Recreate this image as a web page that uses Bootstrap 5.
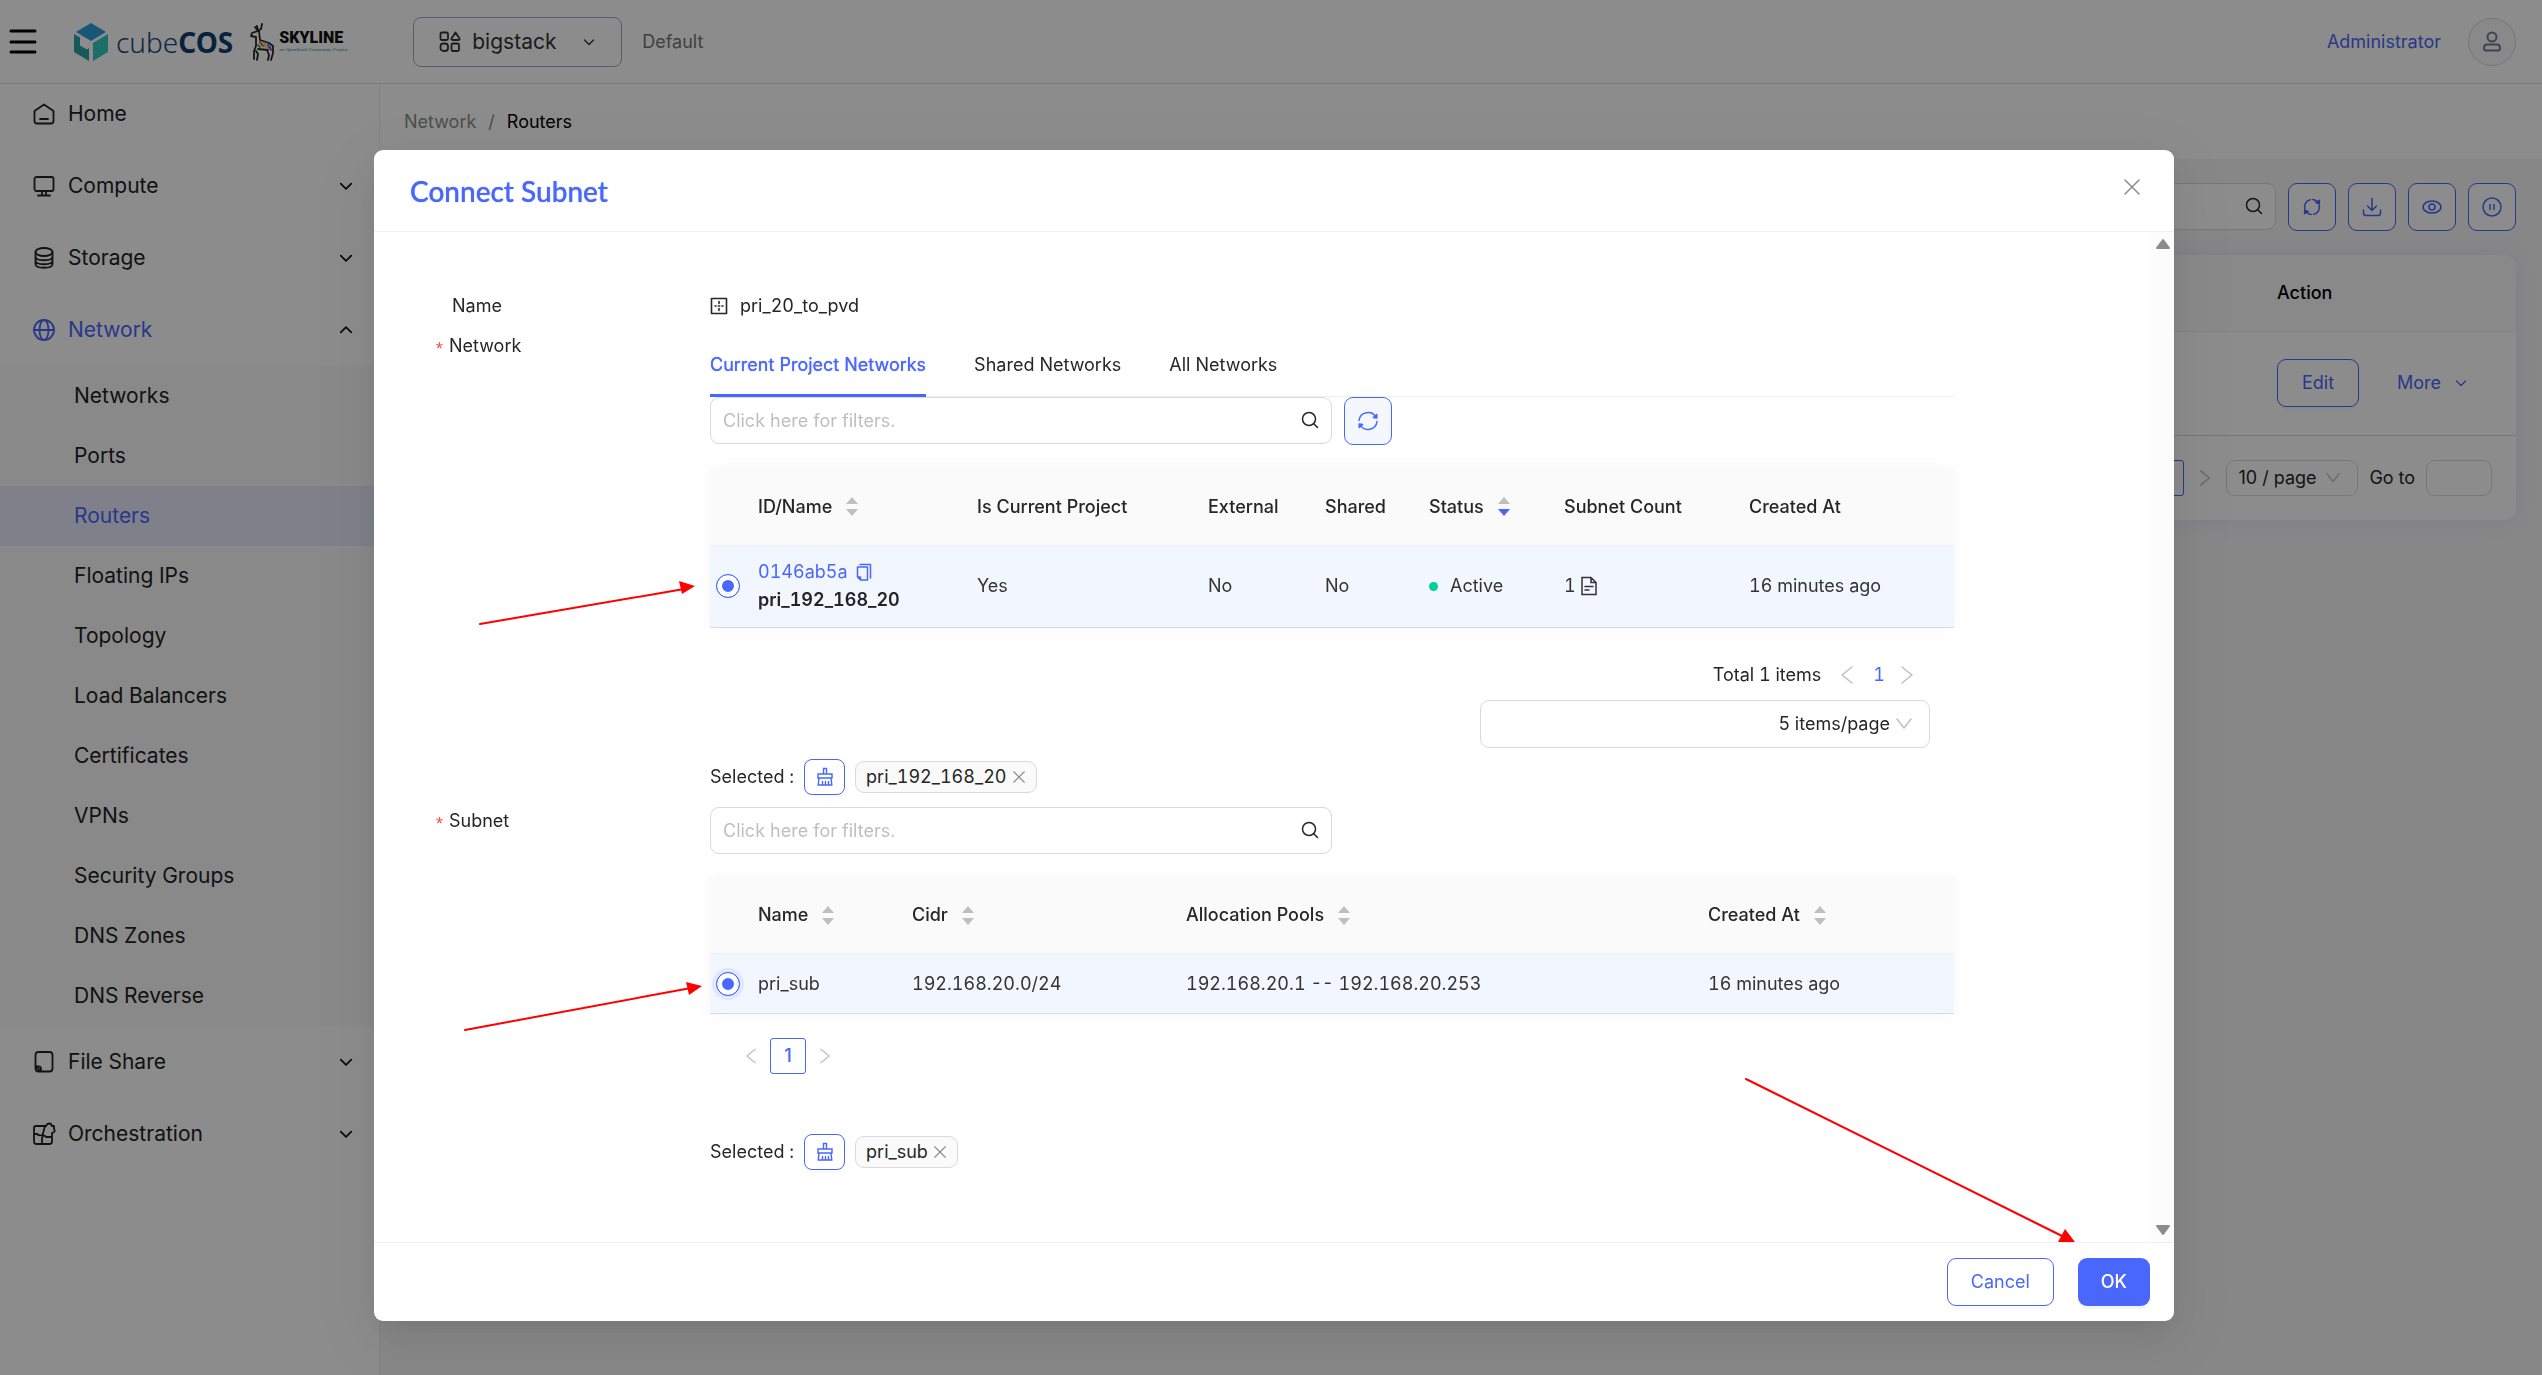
<!DOCTYPE html>
<html lang="en">
<head>
<meta charset="utf-8">
<meta name="viewport" content="width=device-width, initial-scale=1">
<title>Routers - Connect Subnet</title>
<link href="https://cdn.jsdelivr.net/npm/bootstrap@5.3.0/dist/css/bootstrap.min.css" rel="stylesheet">
<style>
:root{--brand:#4a67fb;--ink:#262626;--line:#d9d9d9;--soft:#f0f0f0}
body{font-family:Inter,"Liberation Sans",sans-serif;font-size:18px;line-height:28px;color:var(--ink);font-feature-settings:"tnum";background:#f6f6f7}
a{color:inherit;text-decoration:none}
svg{fill:none;stroke:currentColor;stroke-linecap:round;stroke-linejoin:round;display:block;flex:none}
.i24{width:24px;height:24px}.i20{width:20px;height:20px}.i16{width:16px;height:16px}.i14{width:14px;height:14px}.i12{width:12px;height:12px}
.brand{color:var(--brand)}
.mute{color:#bfbfbf}
.grey{color:#8c8c8c}
/* header */
.topbar{height:84px;border-bottom:1px solid #dcdcdc;background:#fff;padding:0 26px 0 8px}
.plain{border:0;background:none;padding:0}
.logo-cube{width:34px;height:38px;stroke:none;margin-left:36px}
.logo-word{font-size:28px;color:#16497d;line-height:36px;margin-left:8px;font-family:"Noto Sans",sans-serif;font-weight:300}
.logo-word b{font-weight:700;color:#0f3f70}
.deer{width:26px;height:38px;margin-left:16px}
.sky{margin-left:4px;width:70px;color:#111;white-space:nowrap}
.sky-name{font-family:Roboto,sans-serif;font-size:16px;line-height:16px;font-weight:900}
.sky-sub{font-size:5px;line-height:8px;color:#2583ab;font-style:italic;font-family:"Liberation Serif",serif}
.proj{height:50px;width:209px;border:1px solid #a3a8b8;border-radius:8px;background:#fff;padding:0 26px 0 24px;gap:10px;font-size:21px;color:#333;margin-left:64px}
.domain{color:#757575;margin-left:20px}
.avatar{width:48px;height:48px;border:1px solid #d3d6e2;border-radius:50%;background:#fafafa;color:#777b88;margin-left:27px}
/* sidebar */
.side{width:380px;background:#fff;border-right:1px solid #eee;color:#222;font-size:21px}
.side-item{height:60px;margin:6px 0;padding:0 26px 0 32px;gap:12px}
.side-item:first-child{margin-top:0}
.side-item.on{color:var(--brand)}
.side-item .chev{color:#111}
.side-sub{background:#fafafb}
.side-sub a{display:flex;align-items:center;height:60px;padding-left:74px}
.side-sub a.on{background:#e9e9fb;color:var(--brand)}
/* page */
.crumbs{height:75px;background:#fff;padding:0 24px;color:#8c8c8c}
.page{padding:24px 26px 24px 24px}
.bar-gap{gap:12px}
.tool{width:48px;height:48px;border:1px solid var(--brand);border-radius:9px;color:var(--brand);background:#fff;padding:0}
.tool.pale{background:#f5f7ff}
.field{border:1px solid var(--line);border-radius:9px;background:#fff;color:var(--ink);font-size:18px;height:47px;padding:0 40px 0 12px;width:100%}
.field::placeholder{color:#bfbfbf;opacity:1}
.lens{top:13px;right:12px}
.panel{margin-top:24px;background:#fff;border-radius:12px;box-shadow:0 0 24px rgba(70,80,160,.08);overflow:hidden}
.grid{width:100%;table-layout:fixed;border-collapse:collapse}
.grid th{height:76px;background:#fafafa;border-bottom:1px solid var(--soft);font-weight:500;padding:0 12px}
.grid td{border-bottom:1px solid #d6dae8;padding:0 12px}
.act-col{width:251px}
.grid .tall{height:104px}
.btn-line{min-width:82px;height:48px;border:1px solid var(--brand);border-radius:9px;background:#fff;color:var(--brand);padding:0 23px;box-shadow:0 3px 0 rgba(0,0,0,.02)}
.more{margin-left:38px;gap:14px}
.pager{padding:24px 24px 24px 0;gap:11px}
.pg{min-width:36px;height:36px;border:1px solid var(--brand);border-radius:3px;color:var(--brand);font-weight:500;background:#fff;padding:0}
.pick{appearance:none;border:1px solid var(--line);border-radius:9px;background:#fff;color:var(--ink);padding:0 0 0 11px;height:36px;width:132px}
.goto{width:66px;height:36px;padding:0 8px}
.caret-r{top:50%;right:18px;transform:translateY(-50%);pointer-events:none}
/* dialog */
.modal-backdrop{--bs-backdrop-opacity:.45}
.modal{padding-left:6px}
.modal-dialog{max-width:1800px;margin:150px auto 0}
.modal-content{border:0;border-radius:9px;box-shadow:0 9px 24px -12px rgba(0,0,0,.12),0 14px 42px rgba(0,0,0,.06),0 18px 72px 24px rgba(0,0,0,.04)}
.modal-header{height:82px;padding:0 34px 0 36px;border-bottom:1px solid var(--soft)}
.modal-title{font-family:Lato,sans-serif;font-size:28px;line-height:36px;font-weight:500;color:var(--brand);text-shadow:0 0 1px var(--brand)}
.shut{margin-bottom:8px}
.form-area{padding:60px 197px 72px 36px}
.lab{width:300px;padding-left:42px}
.lab.req{padding-left:24px}
.star{display:inline-block;width:15px;color:#ff4d4f;font-family:"Liberation Mono",monospace;vertical-align:-3px}
.gap-name{gap:12px}
.f-row+.f-row{margin-top:12px}
.tabs{height:65px;gap:48px;border-bottom:1px solid var(--soft)}
.tabs button{margin-bottom:-1px;padding-top:3px;border-bottom:3px solid transparent;color:var(--ink)}
.tabs button.on{color:var(--brand);text-shadow:0 0 1px var(--brand);border-color:var(--brand)}
.filter{width:622px}
.tbl{margin-top:24px;box-shadow:0 0 18px rgba(0,0,0,.035)}
.tbl td{background:#f2f6ff;color:#333}
.tbl .h82{height:82px}.tbl .h59{height:60px}
.tbl td:first-child{padding:0 0 0 6px}
.id-cell{line-height:28px}
.c-r{width:36px}
.pick-dot{appearance:none;display:block;width:24px;height:24px;border:1px solid var(--brand);border-radius:50%;background:var(--brand);box-shadow:inset 0 0 0 5px #fff;margin:0}
.pick-dot.lit{box-shadow:inset 0 0 0 5px #fff,0 0 0 4px #e0e8ff}
.sort{width:12px;height:19px;stroke:none;fill:#bfbfbf;margin-left:14px}
.sort .hot{fill:var(--brand)}
.dot{width:9px;height:9px;border-radius:50%;background:#00d19b;margin-right:12px}
.total{margin-top:29px;height:36px;gap:16px;padding-right:17px}
.sizer{width:450px;margin:7px 24px 0 auto}
.sizer .pick{width:100%;height:48px;text-align-last:right;padding-right:39px}
.sel{height:36px;margin-top:11px}
.sweep{width:41px;height:36px;border:1px solid var(--brand);border-radius:8px;color:var(--brand);background:#fff;padding:0;margin:0 10px;box-shadow:0 3px 0 rgba(0,0,0,.02)}
.chip{height:32px;border:1px solid var(--line);border-radius:9px;background:#fafafa;padding:0 11px 0 10px;gap:6px}
.pg-row{margin-top:24px;padding-left:32px;gap:10px}
.sel.low{margin-top:60px}
.rail{flex:none;width:23px;background:#fcfcfc;padding:6px 0}
.rail svg{fill:#8b8b8b;stroke:#8b8b8b;width:16px;height:12px}
.modal-footer{height:79px;padding:0 24px;gap:24px;border-top:1px solid var(--soft)}
.modal-footer button{margin:0}
.btn-fill{height:48px;border:0;border-radius:9px;background:var(--brand);color:#fff;padding:0 23px;font-weight:500;box-shadow:0 3px 0 rgba(0,0,0,.045)}
.notes{inset:0;width:100%;height:100%;z-index:1060;pointer-events:none;stroke:#f00;stroke-width:2}
.notes polygon{fill:#f00;stroke:none}
</style>
</head>
<body>
<svg class="d-none" aria-hidden="true">
 <symbol id="down" viewBox="0 0 12 12"><path d="M1.500 4l4.500 4.500L10.500 4"/></symbol>
 <symbol id="wide" viewBox="0 0 16 12"><path d="M1 1l7 9 7-9"/></symbol>
 <symbol id="left" viewBox="0 0 12 18"><path d="M11 1L1 9l10 8"/></symbol>
 <symbol id="right" viewBox="0 0 12 18"><path d="M1 1l10 8L1 17"/></symbol>
 <symbol id="lens" viewBox="0 0 20 20"><circle cx="9" cy="9" r="6.500"/><path d="M14 14l3.500 3.500"/></symbol>
 <symbol id="sync" viewBox="0 0 24 24"><path d="M3.500 14.500A8.800 8.800 0 0 1 10 3.200M13 3a9 9 0 0 1 5.500 2.700M20.500 9.500A8.800 8.800 0 0 1 14 20.800M11 21a9 9 0 0 1-5.500-2.700"/><path d="M16.500 6.500l4.500-2.500-.3 4.300zM7.500 17.500L3 20l.3-4.300z" fill="currentColor"/></symbol>
 <symbol id="ring" viewBox="0 0 24 24"><path d="M3 11.500a9 9 0 0 1 17-3M21 12.500a9 9 0 0 1-17 3"/><path d="M20.800 5.500v3.500l-3.500-.4zM3.200 18.500v-3.500l3.500 .4z" fill="currentColor"/></symbol>
 <symbol id="broom" viewBox="0 0 20 20"><path d="M8.500 7V1.500h3V7M3 7h14v4H3zM4 11l-.8 7h13.600l-.8-7M7.500 18v-3.500M10.500 18v-3.500M13.500 18v-3.500" stroke-linejoin="miter"/></symbol>
 <symbol id="close" viewBox="0 0 16 16"><path d="M1 1l14 14M15 1L1 15"/></symbol>
 <symbol id="updown" viewBox="0 0 12 19"><path d="M6 0l6 7H0zM6 19l6-7H0z"/></symbol>
</svg>

<div class="min-vh-100 d-flex flex-column">
 <header class="topbar d-flex align-items-center">
  <button class="plain" aria-label="Toggle menu"><svg width="30" height="28" viewBox="0 0 30 28" stroke-width="3"><path d="M3 3h24M3 14h24M3 24h24"/></svg></button>
  <svg class="logo-cube" viewBox="0 0 34 38"><path d="M17 0l15 9-15 9L2 9z" fill="#2e9fd8"/><path d="M0 11l6 3.500v8l7 4 2-1.500V38L0 29z" fill="#28a3a5"/><path d="M34 11L19 20v18l15-9z" fill="#33c9c0"/></svg>
  <span class="logo-word">cube<b>COS</b></span>
  <svg class="deer" viewBox="0 0 26 38" stroke="#111" stroke-width="1.800"><path d="M13 1l-1 5-3 2-1-5M6 4l3 4-6 2-1 3 5 1v9l-2 5v8M7 28l2 3-1 6M10 8l1 9 9 3 4 3v7l-2 7M18 27l2 5-1 5M9 26l10 1"/><path d="M11 19l3 4" stroke="#e33"/><path d="M15 20l2 4" stroke="#f5b921"/><path d="M19 21l1 4" stroke="#37c"/><path d="M9 22l2 2" stroke="#3a5"/><path d="M21 24l1 3" stroke="#93c"/></svg>
  <div class="sky"><div class="sky-name">SKYLINE</div><div class="sky-sub">an OpenStack Community Project</div></div>
  <button class="proj d-flex align-items-center"><svg class="i24" viewBox="0 0 24 24" stroke-width="1.800"><rect x="2.500" y="2.500" width="7.500" height="7.500" rx="1.500"/><path d="M17.500 2.500l4 6q.5 1.500-1 1.500h-6q-1.500 0-1-1.500z"/><rect x="2.500" y="13.500" width="7.500" height="7.500" rx="3"/><rect x="13.500" y="13.500" width="7.500" height="7.500" rx="1.500"/></svg><span>bigstack</span><svg class="i12 ms-auto" stroke-width="1.300"><use href="#down"/></svg></button>
  <span class="domain">Default</span>
  <a href="#" class="brand ms-auto">Administrator</a>
  <button class="avatar d-flex align-items-center justify-content-center p-0" aria-label="Account"><svg class="i24" viewBox="0 0 24 24" stroke-width="2"><circle cx="12" cy="7" r="4.500"/><path d="M7 14.500h10q3 0 3 3.500 0 2.500-2 2.500H6q-2 0-2-2.500 0-3.500 3-3.500z"/></svg></button>
 </header>
 <div class="d-flex flex-grow-1">
  <nav class="side flex-shrink-0 d-flex flex-column" aria-label="Main">
   <a href="#" class="side-item d-flex align-items-center"><svg class="i24" viewBox="0 0 24 24" stroke-width="1.800"><path d="M2.500 9L12 2.500 21.500 9v10q0 2.500-2.500 2.500H5Q2.500 21.500 2.500 19zM8 17h8"/></svg>Home</a>
   <a href="#" class="side-item d-flex align-items-center"><svg class="i24" viewBox="0 0 24 24" stroke-width="1.800"><rect x="2.500" y="3" width="19" height="14" rx="2"/><path d="M10 17v4M14 17v4M6 21.500h12"/></svg>Compute<svg class="i14 ms-auto chev" stroke-width="1.500"><use href="#down"/></svg></a>
   <a href="#" class="side-item d-flex align-items-center"><svg class="i24" viewBox="0 0 24 24" stroke-width="1.800"><ellipse cx="12" cy="6" rx="8.500" ry="4"/><path d="M3.500 6v12c0 5 17 5 17 0V6M3.500 10.500c0 5 17 5 17 0M3.500 14.500c0 5 17 5 17 0"/></svg>Storage<svg class="i14 ms-auto chev" stroke-width="1.500"><use href="#down"/></svg></a>
   <a href="#" class="side-item on d-flex align-items-center"><svg class="i24" viewBox="0 0 24 24" stroke-width="1.800"><circle cx="12" cy="12" r="10"/><ellipse cx="12" cy="12" rx="4.500" ry="10"/><path d="M2 12h20"/></svg>Network<svg class="i14 ms-auto chev" viewBox="0 0 12 12" stroke-width="1.500"><path d="M1.500 8L6 3.500 10.500 8"/></svg></a>
   <div class="side-sub">
    <a href="#">Networks</a><a href="#">Ports</a><a href="#" class="on">Routers</a><a href="#">Floating IPs</a><a href="#">Topology</a><a href="#">Load Balancers</a><a href="#">Certificates</a><a href="#">VPNs</a><a href="#">Security Groups</a><a href="#">DNS Zones</a><a href="#">DNS Reverse</a>
   </div>
   <a href="#" class="side-item d-flex align-items-center"><svg class="i24" viewBox="0 0 24 24" stroke-width="1.800"><path d="M6.500 2h11q3 0 3 3v13.500q0 3-3 3H9l-5.500-5V5q0-3 3-3zM3.500 16.500v2q0 3 3 3H9v-2.500q0-2.500-2.500-2.500z"/></svg>File Share<svg class="i14 ms-auto chev" stroke-width="1.500"><use href="#down"/></svg></a>
   <a href="#" class="side-item d-flex align-items-center"><svg class="i24" viewBox="0 0 24 24" stroke-width="1.800"><path d="M14 4H4Q2 4 2 6v13.500Q2 22 4.500 22h13q2.500 0 2.500-2.500V13M14 4q1-2.500 3.500-2.500 2 0 2.200 2.500H22v3q1.500 2 0 3l-2 1v2M14 4q-2 1-2 4l-1 3v3l-1 2v6M2 12h3q2 2 5 1M11 14q2-1 3 1h6"/></svg>Orchestration<svg class="i14 ms-auto chev" stroke-width="1.500"><use href="#down"/></svg></a>
  </nav>
  <main class="flex-grow-1">
   <div class="crumbs d-flex align-items-center"><a href="#">Network</a><span class="px-2 mx-1">/</span><span class="text-black">Routers</span></div>
   <div class="page">
    <div class="d-flex bar-gap">
     <div class="position-relative flex-grow-1"><input class="field" aria-label="Filter routers"><svg class="i20 lens position-absolute" stroke-width="1.500"><use href="#lens"/></svg></div>
     <button class="tool d-flex align-items-center justify-content-center" aria-label="Refresh"><svg class="i20" stroke-width="1.800"><use href="#sync"/></svg></button>
     <button class="tool d-flex align-items-center justify-content-center" aria-label="Download"><svg class="i20" viewBox="0 0 20 20" stroke-width="1.500"><path d="M10 1.500V13M5.500 9l4.500 4.500L14.500 9M1.500 13v3q0 2.500 2.500 2.500h12q2.500 0 2.500-2.500v-3"/></svg></button>
     <button class="tool d-flex align-items-center justify-content-center" aria-label="Columns"><svg class="i20" viewBox="0 0 20 20" stroke-width="1.600"><ellipse cx="10" cy="10" rx="9" ry="6"/><circle cx="10" cy="10" r="3"/></svg></button>
     <button class="tool d-flex align-items-center justify-content-center" aria-label="Pause"><svg class="i20" viewBox="0 0 20 20" stroke-width="1.500"><circle cx="10" cy="10" r="9"/><path d="M8 7.500v5M12 7.500v5"/></svg></button>
    </div>
    <div class="panel">
     <table class="grid"><colgroup><col><col class="act-col"></colgroup>
      <thead><tr><th></th><th class="text-black">Action</th></tr></thead>
      <tbody><tr><td class="tall"></td><td><div class="d-flex align-items-center"><button class="btn-line">Edit</button><button class="plain brand more d-flex align-items-center">More<svg class="i12" stroke-width="1.300"><use href="#down"/></svg></button></div></td></tr></tbody>
     </table>
     <div class="pager d-flex align-items-center justify-content-end"><button class="pg">1</button><svg class="mute mx-1" width="12" height="16" stroke-width="1.500"><use href="#right"/></svg>
      <span class="position-relative"><select class="pick" aria-label="Page size"><option>10 / page</option></select><svg class="mute position-absolute caret-r" width="14" height="11" stroke-width="1.500"><use href="#wide"/></svg></span>
      <label for="goto">Go to</label><input id="goto" class="field goto"></div>
    </div>
   </div>
  </main>
 </div>
</div>

<div class="modal-backdrop show"></div>
<div class="modal d-block" role="dialog" aria-labelledby="dlg-title">
 <div class="modal-dialog">
  <div class="modal-content">
   <div class="modal-header d-flex justify-content-between">
    <h1 class="modal-title" id="dlg-title">Connect Subnet</h1>
    <button class="plain grey shut" aria-label="Close"><svg class="i16" stroke-width="1.500"><use href="#close"/></svg></button>
   </div>
   <div class="d-flex">
    <form class="form-area flex-grow-1">
     <div class="f-row d-flex"><div class="lab flex-shrink-0">Name</div>
      <div class="d-flex align-items-center gap-name"><svg width="18" height="18" viewBox="0 0 18 18" stroke-width="1.600" stroke-linecap="butt"><rect x="1.500" y="1.500" width="15" height="15"/><path d="M5 9h1M8.300 9h1.400M12 9h1M9 4.500v2M9 11.500v2"/></svg><span>pri_20_to_pvd</span></div>
     </div>
     <div class="f-row d-flex"><label class="lab req flex-shrink-0" for="net-filter"><span class="star">*</span>Network</label>
      <div class="flex-grow-1">
       <div class="tabs d-flex" role="tablist"><button type="button" class="plain on" role="tab">Current Project Networks</button><button type="button" class="plain" role="tab">Shared Networks</button><button type="button" class="plain" role="tab">All Networks</button></div>
       <div class="d-flex bar-gap"><div class="position-relative filter"><input id="net-filter" class="field" placeholder="Click here for filters."><svg class="i20 lens position-absolute" stroke-width="1.500"><use href="#lens"/></svg></div>
        <button type="button" class="tool pale d-flex align-items-center justify-content-center" aria-label="Refresh"><svg class="i24" stroke-width="1.500"><use href="#ring"/></svg></button></div>
       <table class="grid tbl mt-4 pt-0">
        <colgroup><col class="c-r"><col style="width:219px"><col style="width:231px"><col style="width:117px"><col style="width:104px"><col style="width:135px"><col style="width:185px"><col></colgroup>
        <thead><tr><th></th><th><div class="d-flex align-items-center">ID/Name<svg class="sort" viewBox="0 0 12 19"><use href="#updown"/></svg></div></th><th>Is Current Project</th><th>External</th><th>Shared</th><th><div class="d-flex align-items-center">Status<svg class="sort" viewBox="0 0 12 19"><path d="M6 0l6 7H0z"/><path class="hot" d="M6 19l6-7H0z"/></svg></div></th><th>Subnet Count</th><th>Created At</th></tr></thead>
        <tbody><tr><td class="h82"><input type="radio" class="pick-dot" name="net" checked aria-label="pri_192_168_20"></td>
         <td class="id-cell"><div class="d-flex align-items-center"><a href="#" class="brand">0146ab5a</a><svg class="brand ms-2" width="16" height="18" viewBox="0 0 16 18" stroke-width="1.500" stroke-linejoin="miter"><path d="M1.500 4h10v13h-7l-3-3zM1.500 14h3v3M4 1.500h10.500V15"/></svg></div><b class="fw-semibold text-body">pri_192_168_20</b></td>
         <td>Yes</td><td>No</td><td>No</td><td><div class="d-flex align-items-center"><span class="dot"></span>Active</div></td>
         <td><div class="d-flex align-items-center">1<svg class="ms-1" width="18" height="20" viewBox="0 0 18 20" stroke-width="1.500"><path d="M2 1.500h9l5 5v12H2zM11 1.500v5h5M5 10.500h8M5 14h4" stroke-linejoin="miter"/></svg></div></td><td>16 minutes ago</td></tr></tbody>
       </table>
       <div class="total d-flex align-items-center justify-content-end"><span>Total 1 items</span><svg class="mute ms-1 me-1" width="12" height="18" stroke-width="1.500"><use href="#left"/></svg><a href="#" class="brand">1</a><svg class="mute me-4" width="12" height="18" stroke-width="1.500"><use href="#right"/></svg></div>
       <div class="sizer position-relative"><select class="pick" aria-label="Items per page"><option>5 items/page</option></select><svg class="mute position-absolute caret-r" width="16" height="12" stroke-width="1.500"><use href="#wide"/></svg></div>
       <div class="sel d-flex align-items-center">Selected :<button type="button" class="sweep d-flex align-items-center justify-content-center" aria-label="Clear"><svg class="i20" stroke-width="1.400"><use href="#broom"/></svg></button><span class="chip d-flex align-items-center">pri_192_168_20<button type="button" class="plain grey" aria-label="Remove"><svg class="i12" stroke-width="1.500"><use href="#close"/></svg></button></span></div>
      </div>
     </div>
     <div class="f-row d-flex"><label class="lab req flex-shrink-0" for="sub-filter"><span class="star">*</span>Subnet</label>
      <div class="flex-grow-1">
       <div class="position-relative filter"><input id="sub-filter" class="field" placeholder="Click here for filters."><svg class="i20 lens position-absolute" stroke-width="1.500"><use href="#lens"/></svg></div>
       <table class="grid tbl">
        <colgroup><col class="c-r"><col style="width:154px"><col style="width:274px"><col style="width:522px"><col></colgroup>
        <thead><tr><th></th><th><div class="d-flex align-items-center">Name<svg class="sort" viewBox="0 0 12 19"><use href="#updown"/></svg></div></th><th><div class="d-flex align-items-center">Cidr<svg class="sort" viewBox="0 0 12 19"><use href="#updown"/></svg></div></th><th><div class="d-flex align-items-center">Allocation Pools<svg class="sort" viewBox="0 0 12 19"><use href="#updown"/></svg></div></th><th><div class="d-flex align-items-center">Created At<svg class="sort" viewBox="0 0 12 19"><use href="#updown"/></svg></div></th></tr></thead>
        <tbody><tr><td class="h59"><input type="radio" class="pick-dot lit" name="sub" checked aria-label="pri_sub"></td><td>pri_sub</td><td>192.168.20.0/24</td><td>192.168.20.1 -- 192.168.20.253</td><td>16 minutes ago</td></tr></tbody>
       </table>
       <div class="pg-row d-flex align-items-center"><svg class="mute mx-1" width="10" height="16" stroke-width="1.500"><use href="#left"/></svg><button type="button" class="pg">1</button><svg class="mute mx-1" width="10" height="16" stroke-width="1.500"><use href="#right"/></svg></div>
       <div class="sel low d-flex align-items-center">Selected :<button type="button" class="sweep d-flex align-items-center justify-content-center" aria-label="Clear"><svg class="i20" stroke-width="1.400"><use href="#broom"/></svg></button><span class="chip d-flex align-items-center">pri_sub<button type="button" class="plain grey" aria-label="Remove"><svg class="i12" stroke-width="1.500"><use href="#close"/></svg></button></span></div>
      </div>
     </div>
    </form>
    <div class="rail d-flex flex-column justify-content-between align-items-center" aria-hidden="true"><svg viewBox="0 0 16 12" stroke-width="2"><path d="M8 2l6 8H2z"/></svg><svg viewBox="0 0 16 12" stroke-width="2"><path d="M8 10l6-8H2z"/></svg></div>
   </div>
   <div class="modal-footer d-flex justify-content-end"><button class="btn-line">Cancel</button><button class="btn-fill">OK</button></div>
  </div>
 </div>
</div>
<svg class="notes position-fixed" aria-hidden="true"><path d="M480 624L684 589M465 1030L691 988M1746 1079L2062 1236"/><polygon points="695,586 679,581 682,594"/><polygon points="702,986 686,982 689,995"/><polygon points="2075,1242 2065,1229 2058,1242"/></svg>
<script src="https://cdn.jsdelivr.net/npm/bootstrap@5.3.0/dist/js/bootstrap.bundle.min.js"></script>
</body>
</html>
